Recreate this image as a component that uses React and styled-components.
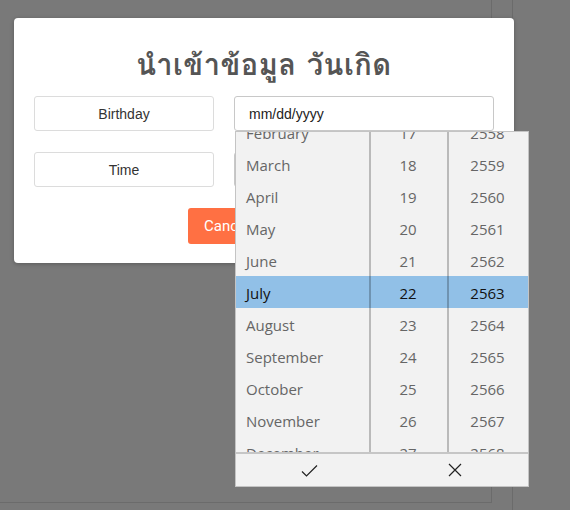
import React from "react";
import styled, { createGlobalStyle } from "styled-components";

const GlobalStyle = createGlobalStyle`
  html, body {
    margin: 0;
    padding: 0;
    background: #797979;
    font-family: "Liberation Sans", Arial, sans-serif;
  }
  * { box-sizing: border-box; }
`;

const MONTHS = [
  "January", "February", "March", "April", "May", "June", "July",
  "August", "September", "October", "November", "December"
];
const DAYS = Array.from({ length: 31 }, (_, i) => String(i + 1));
const YEARS = Array.from({ length: 40 }, (_, i) => String(2542 + i));

const ROW = 32;
const CENTER_ROW = 4.5; // selected row sits at 144px inside the wheel

const Page = styled.div`
  position: relative;
  display: flex;
  width: 570px;
  height: 510px;
  overflow: hidden;
`;

const MainPane = styled.div`
  width: 492px;
  height: 503px;
  border-right: 1px solid #6b6b6b;
  border-bottom: 1px solid #6b6b6b;
`;

const SidePane = styled.div`
  margin-left: 20px;
  flex: 1;
  border-left: 1px solid #6b6b6b;
`;

const Overlay = styled.div`
  position: absolute;
  inset: 0;
  padding: 18px 0 0 14px;
`;

const Modal = styled.div`
  width: 500px;
  height: 245px;
  background: #fff;
  border-radius: 4px;
  box-shadow: 0 1px 4px rgba(0, 0, 0, 0.25);
  padding: 30px 20px 19px;
  display: flex;
  flex-direction: column;
`;

const Title = styled.h2`
  margin: 0 0 14px;
  text-align: center;
  font-family: Tahoma, Loma, Garuda, "Noto Sans Thai", "Noto Sans", sans-serif;
  font-size: 29px;
  letter-spacing: 0.5px;
  font-weight: 700;
  line-height: 34px;
  color: #555;
`;

const FormGrid = styled.div`
  display: grid;
  grid-template-columns: 180px 260px;
  column-gap: 20px;
  row-gap: 21px;
`;

const LabelBox = styled.div`
  height: 35px;
  border: 1px solid #dcdcdc;
  border-radius: 3px;
  display: flex;
  align-items: center;
  justify-content: center;
  font-size: 14px;
  color: #333;
`;

const InputWrap = styled.div`
  position: relative;
`;

const DateInput = styled.div`
  height: 35px;
  border: 1px solid #c8c8c8;
  border-radius: 3px;
  display: flex;
  align-items: center;
  padding-left: 14px;
  font-size: 14px;
  color: #222;
`;

const Actions = styled.div`
  margin-top: 21px;
  display: flex;
  justify-content: center;
  gap: 10px;
`;

const Button = styled.button`
  height: 36px;
  padding: 0 16px;
  border: none;
  border-radius: 3px;
  background: ${(p) => p.$bg};
  color: #fff;
  font-family: Roboto, "Liberation Sans", sans-serif;
  font-size: 15px;
`;

const Picker = styled.div`
  position: absolute;
  top: 35px;
  left: 1px;
  width: 294px;
  height: 356px;
  border: 1px solid #c4c4c4;
  background: #f2f2f2;
  z-index: 5;
  display: flex;
  flex-direction: column;
  font-family: "Open Sans", "Noto Sans", sans-serif;
  font-size: 15px;
`;

const Wheels = styled.div`
  display: flex;
  height: 320px;
  overflow: hidden;
`;

const Column = styled.div`
  position: relative;
  width: ${(p) => p.$w}px;
  height: 100%;
  overflow: hidden;
  ${(p) =>
    p.$sep &&
    `&::after {
      content: "";
      position: absolute;
      top: 0;
      bottom: 0;
      left: 0;
      width: 2px;
      background: rgba(0, 0, 0, 0.23);
    }`}
`;

const Row = styled.div`
  height: ${ROW}px;
  line-height: 35px;
  padding-left: ${(p) => (p.$left ? "10px" : "0")};
  text-align: ${(p) => (p.$left ? "left" : "center")};
  background: ${(p) => (p.$active ? "#91c0e7" : "transparent")};
  color: ${(p) => (p.$active ? "#111" : "#666")};
  white-space: nowrap;
`;

const Footer = styled.div`
  flex: 1;
  display: flex;
  border-top: 2px solid #c6c6c6;
`;

const FooterBtn = styled.div`
  flex: 1;
  display: flex;
  align-items: center;
  justify-content: center;
`;

function Wheel({ items, selected, width, left, sep }) {
  const idx = items.indexOf(selected);
  return (
    <Column $w={width} $sep={sep}>
      <div style={{ marginTop: (CENTER_ROW - idx) * ROW }}>
        {items.map((it) => (
          <Row key={it} $left={left} $active={it === selected}>
            {it}
          </Row>
        ))}
      </div>
    </Column>
  );
}

export default function App() {
  return (
    <>
      <GlobalStyle />
      <Page>
        <MainPane />
        <SidePane />
        <Overlay>
          <Modal>
            <Title>นำเข้าข้อมูล วันเกิด</Title>
            <FormGrid>
              <LabelBox>Birthday</LabelBox>
              <InputWrap>
                <DateInput>mm/dd/yyyy</DateInput>
                <Picker>
                  <Wheels>
                    <Wheel items={MONTHS} selected="July" width={133} left />
                    <Wheel items={DAYS} selected="22" width={78} sep />
                    <Wheel items={YEARS} selected="2563" width={81} sep />
                  </Wheels>
                  <Footer>
                    <FooterBtn>
                      <svg width="17" height="13" viewBox="0 0 17 13">
                        <path d="M1 7.5 L5.5 12 L16 1.5" fill="none" stroke="#222" strokeWidth="1.2" />
                      </svg>
                    </FooterBtn>
                    <FooterBtn>
                      <svg width="14" height="14" viewBox="0 0 14 14">
                        <path d="M1 1 L13 13 M13 1 L1 13" fill="none" stroke="#222" strokeWidth="1.2" />
                      </svg>
                    </FooterBtn>
                  </Footer>
                </Picker>
              </InputWrap>
              <LabelBox>Time</LabelBox>
              <DateInput />
            </FormGrid>
            <Actions>
              <Button $bg="#ff7043">Cancel</Button>
              <Button $bg="#4caf50">Save</Button>
            </Actions>
          </Modal>
        </Overlay>
      </Page>
    </>
  );
}
